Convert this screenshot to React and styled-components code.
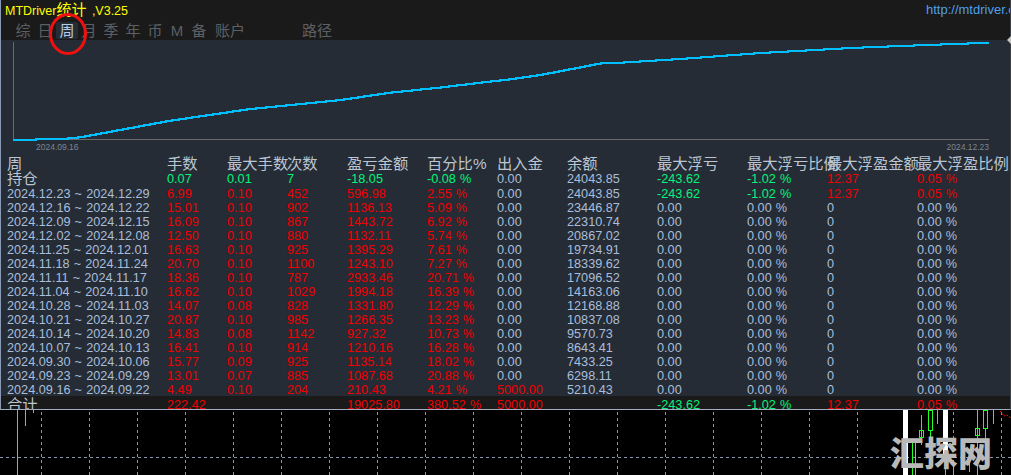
import React from "react";
import styled, { createGlobalStyle } from "styled-components";

const Global = createGlobalStyle`
  html, body { margin: 0; padding: 0; background: #000; }
  body { font-family: "Liberation Sans", "Noto Sans CJK SC", sans-serif; }
`;

const Page = styled.div`
  width: 1011px;
  height: 475px;
  display: flex;
  flex-direction: column;
  overflow: hidden;
  position: relative;
  background: #000;
`;
const Panel = styled.div`
  height: 410px;
  flex: none;
  box-sizing: border-box;
  display: flex;
  flex-direction: column;
  overflow: hidden;
  background: #252c35;
  border-left: 1px solid #8a9ab5;
  border-right: 1px solid #3c4148;
  border-bottom: 1px solid #a3adc2;
`;
const TitleBar = styled.header`
  height: 40px;
  flex: none;
  background: #1a1a1a;
  display: flex;
  flex-direction: column;
`;
const TitleRow = styled.div`
  height: 22px;
  display: flex;
  justify-content: space-between;
  align-items: flex-start;
  padding: 1px 0 0 4px;
  box-sizing: border-box;
  line-height: 17px;
`;
const Title = styled.div`
  color: #ffff00;
  font-size: 12.5px;
  word-spacing: 2px;
  white-space: nowrap;
`;
const TitleCjk = styled.span`
  font-size: 15px;
  line-height: 17px;
`;
const Url = styled.div`
  width: 84px;
  overflow: hidden;
  white-space: nowrap;
  color: #4f9fe8;
  font-size: 13px;
`;
const Tabs = styled.nav`
  height: 18px;
  display: flex;
  padding-left: 11px;
`;
const Tab = styled.div`
  min-width: 22px;
  height: 17px;
  line-height: 17px;
  margin-left: ${(p) => p.$offset || 0}px;
  padding: 0 ${(p) => (p.$wide ? 3 : 0)}px;
  box-sizing: border-box;
  text-align: center;
  font-size: 15px;
  white-space: nowrap;
  border-radius: 2px;
  color: ${(p) => (p.$active ? "#b8cbe6" : "#5c6065")};
  background: ${(p) => (p.$active ? "#252c35" : "transparent")};
`;
const Marker = styled.svg`
  position: absolute;
  left: 46px;
  top: 11px;
  width: 44px;
  height: 46px;
`;
const Notch = styled.div`
  position: absolute;
  right: 0;
  top: 36px;
  width: 0;
  height: 0;
  border: 4px solid transparent;
  border-left-width: 0;
  border-right: 4px solid #c4c4c4;
`;
const Chart = styled.svg`
  display: block;
  flex: none;
  width: 1009px;
  height: 101px;
`;
const DateAxis = styled.div`
  flex: none;
  height: 15px;
  display: flex;
  justify-content: space-between;
  padding: 0 21px 0 35px;
  font-size: 8.5px;
  line-height: 13px;
  color: #7d8691;
`;
const Table = styled.div`
  flex: 1;
  min-height: 0;
  display: flex;
  flex-direction: column;
`;
const Row = styled.div`
  display: grid;
  grid-template-columns: 160px 60px 60px 60px 80px 70px 70px 90px 90px 80px 90px 1fr;
  padding-left: 6px;
  flex: none;
  height: ${(p) => p.$h || 14}px;
  line-height: ${(p) => (p.$h || 14) + (p.$drop || 0) * 2}px;
  background: ${(p) => (p.$total ? "#1a1a1a" : "transparent")};
`;
const tones = {
  plain: "#a9bedb",
  head: "#bcc6d2",
  red: "#ee0000",
  green: "#00f57a",
};
const Cell = styled.div`
  white-space: nowrap;
  word-spacing: ${(p) => (p.$cjk ? 0 : 0.6)}px;
  font-size: ${(p) => (p.$cjk ? 15.3 : 12.7)}px;
  color: ${(p) => tones[p.$tone || "plain"]};
`;
const Lower = styled.div`
  flex: 1;
  min-height: 0;
  position: relative;
`;
const Plot = styled.svg`
  display: block;
  width: 1011px;
  height: 65px;
`;
const Watermark = styled.div`
  position: absolute;
  left: 890px;
  top: 22px;
  font-size: 34px;
  line-height: 40px;
  font-weight: 900;
  white-space: nowrap;
  color: #b9b9b9;
  font-family: "Noto Sans CJK SC", sans-serif;
`;

const curvePts = [
  [13, 140], [30, 139.6], [62, 139], [80, 137.3], [170, 120.7], [250, 109], [340, 100], [390, 92.7],
  [440, 87.5], [480, 82.7], [510, 79.3], [540, 75], [570, 69.3], [600, 63.5], [620, 62.7], [680, 59],
  [760, 53], [850, 48], [900, 46], [989, 42.7],
];
function curvePath() {
  let d = "";
  let seg = 0;
  let prev = null;
  for (let x = 13; x <= 989; x++) {
    while (seg < curvePts.length - 2 && x > curvePts[seg + 1][0]) seg++;
    const [x0, y0] = curvePts[seg];
    const [x1, y1] = curvePts[seg + 1];
    const y = Math.round(y0 + ((y1 - y0) * (x - x0)) / (x1 - x0));
    if (prev === null) d += `M${x} ${y}`;
    else if (y !== prev) d += `H${x}V${y}`;
    prev = y;
  }
  return d + "H989";
}

const rows = [
  ["2024.12.23 ~ 2024.12.29", "6.99", "0.10", "452", "596.98", "2.55 %", "0.00", "24043.85", "-243.62", "-1.02 %", "12.37", "0.05 %"],
  ["2024.12.16 ~ 2024.12.22", "15.01", "0.10", "902", "1136.13", "5.09 %", "0.00", "23446.87"],
  ["2024.12.09 ~ 2024.12.15", "16.09", "0.10", "867", "1443.72", "6.92 %", "0.00", "22310.74"],
  ["2024.12.02 ~ 2024.12.08", "12.50", "0.10", "880", "1132.11", "5.74 %", "0.00", "20867.02"],
  ["2024.11.25 ~ 2024.12.01", "16.63", "0.10", "925", "1395.29", "7.61 %", "0.00", "19734.91"],
  ["2024.11.18 ~ 2024.11.24", "20.70", "0.10", "1100", "1243.10", "7.27 %", "0.00", "18339.62"],
  ["2024.11.11 ~ 2024.11.17", "18.36", "0.10", "787", "2933.46", "20.71 %", "0.00", "17096.52"],
  ["2024.11.04 ~ 2024.11.10", "16.62", "0.10", "1029", "1994.18", "16.39 %", "0.00", "14163.06"],
  ["2024.10.28 ~ 2024.11.03", "14.07", "0.08", "828", "1331.80", "12.29 %", "0.00", "12168.88"],
  ["2024.10.21 ~ 2024.10.27", "20.87", "0.10", "985", "1266.35", "13.23 %", "0.00", "10837.08"],
  ["2024.10.14 ~ 2024.10.20", "14.83", "0.08", "1142", "927.32", "10.73 %", "0.00", "9570.73"],
  ["2024.10.07 ~ 2024.10.13", "16.41", "0.10", "914", "1210.16", "16.28 %", "0.00", "8643.41"],
  ["2024.09.30 ~ 2024.10.06", "15.77", "0.09", "925", "1135.14", "18.02 %", "0.00", "7433.25"],
  ["2024.09.23 ~ 2024.09.29", "13.01", "0.07", "885", "1087.68", "20.88 %", "0.00", "6298.11"],
  ["2024.09.16 ~ 2024.09.22", "4.49", "0.10", "204", "210.43", "4.21 %", "5000.00", "5210.43"],
];
const headers = ["周", "手数", "最大手数", "次数", "盈亏金额", "百分比%", "出入金", "余额", "最大浮亏", "最大浮亏比例", "最大浮盈金额", "最大浮盈比例"];
const tabs = ["综", "日", "周", "月", "季", "年", "币", "M", "备"];

function rowCells(r) {
  const floating = r.length > 8;
  return [
    [r[0], "plain"],
    [r[1], "red"], [r[2], "red"], [r[3], "red"], [r[4], "red"], [r[5], "red"],
    [r[6], r[6] === "0.00" ? "plain" : "red"],
    [r[7], "plain"],
    [floating ? r[8] : "0.00", floating ? "green" : "plain"],
    [floating ? r[9] : "0.00 %", floating ? "green" : "plain"],
    [floating ? r[10] : "0", floating ? "red" : "plain"],
    [floating ? r[11] : "0.00 %", floating ? "red" : "plain"],
  ];
}

const gridX = Array.from({ length: 21 }, (_, i) => 41.5 + i * 48);
const wicks = [
  [17, 0, 65], [25, 0, 16], [33, 0, 3], [912, 30, 65], [915, 30, 65], [921, 5, 35], [930, 20, 35], [937, 0, 14],
  [945, 56, 65], [953, 55, 65], [962, 30, 58], [969, 50, 62], [977, 0, 65], [985, 18, 35], [993, 0, 14],
];
const boxes = [
  [919, 20, 4, 7], [928, 0, 4, 20], [975, 18, 4, 7], [983, 0, 4, 18],
];

export default function App() {
  return (
    <Page>
      <Global />
      <Panel>
        <TitleBar>
          <TitleRow>
            <Title>MTDriver<TitleCjk>统计</TitleCjk> ,V3.25</Title>
            <Url>http://mtdriver.com</Url>
          </TitleRow>
          <Tabs>
            {tabs.map((t) => (
              <Tab key={t} $active={t === "周"}>{t}</Tab>
            ))}
            <Tab $offset={2} $wide>账户</Tab>
            <Tab $offset={51} $wide>路径</Tab>
          </Tabs>
        </TitleBar>
        <Chart viewBox="1 40 1009 101">
          <path d="M13.5 42V139.5H989" fill="none" stroke="#6a6a6a" strokeWidth="1" />
          <path d={curvePath()} fill="none" stroke="#00bfff" strokeWidth="2" shapeRendering="crispEdges" />
        </Chart>
        <DateAxis>
          <span>2024.09.16</span>
          <span>2024.12.23</span>
        </DateAxis>
        <Table>
          <Row $h={16}>
            {headers.map((h) => (
              <Cell key={h} $cjk $tone="head">{h}</Cell>
            ))}
          </Row>
          <Row>
            <Cell $cjk $tone="head">持仓</Cell>
            {["0.07", "0.01", "7", "-18.05", "-0.08 %"].map((v) => (
              <Cell key={v} $tone="green">{v}</Cell>
            ))}
            <Cell>0.00</Cell>
            <Cell>24043.85</Cell>
            <Cell $tone="green">-243.62</Cell>
            <Cell $tone="green">-1.02 %</Cell>
            <Cell $tone="red">12.37</Cell>
            <Cell $tone="red">0.05 %</Cell>
          </Row>
          {rows.map((r) => (
            <Row key={r[0]} $drop={1}>
              {rowCells(r).map(([v, tone], i) => (
                <Cell key={i} $tone={tone}>{v}</Cell>
              ))}
            </Row>
          ))}
          <Row $total $drop={2}>
            <Cell $cjk $tone="head">合计</Cell>
            <Cell $tone="red">222.42</Cell>
            <Cell />
            <Cell />
            <Cell $tone="red">19025.80</Cell>
            <Cell $tone="red">380.52 %</Cell>
            <Cell $tone="red">5000.00</Cell>
            <Cell />
            <Cell $tone="green">-243.62</Cell>
            <Cell $tone="green">-1.02 %</Cell>
            <Cell $tone="red">12.37</Cell>
            <Cell $tone="red">0.05 %</Cell>
          </Row>
        </Table>
      </Panel>
      <Marker viewBox="0 0 44 46">
        <ellipse cx="22" cy="23" rx="17.5" ry="19.5" fill="none" stroke="#f01010" strokeWidth="3" />
      </Marker>
      <Notch />
      <Lower>
        <Plot viewBox="0 0 1011 65">
          <g stroke="#8797ad" strokeWidth="1" strokeDasharray="3 3">
            {gridX.map((x) => (
              <path key={x} d={`M${x} 2V65`} />
            ))}
            <path d="M0 47.5H1011" />
          </g>
          <g shapeRendering="crispEdges">
            <rect x="903" y="0" width="5" height="65" fill="#fff" />
            <rect x="943" y="0" width="5" height="45" fill="#fff" />
            <g stroke="#22ff22" strokeWidth="1" fill="none">
              {wicks.map(([x, a, b]) => (
                <path key={x} d={`M${x + 0.5} ${a}V${b}`} />
              ))}
              {boxes.map(([x, y, w, h]) => (
                <rect key={x} x={x + 0.5} y={y + 0.5} width={w} height={h} />
              ))}
            </g>
          </g>
          <path d="M1000 1L1004 6L1007 5L1011 8" fill="none" stroke="#ee1111" strokeWidth="1" strokeDasharray="2 1" />
        </Plot>
        <Watermark>汇探网</Watermark>
      </Lower>
    </Page>
  );
}
